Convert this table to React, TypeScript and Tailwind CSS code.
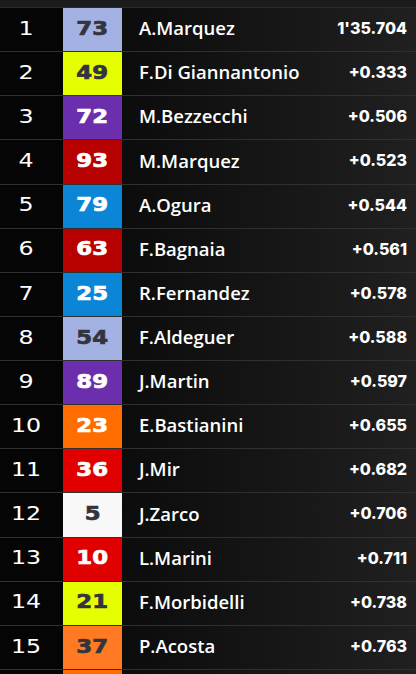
const riders = [
  { pos: 1, num: '73', bg: 'bg-[#a3b1e3]', dark: true, name: 'A.Marquez', time: "1'35.704" },
  { pos: 2, num: '49', bg: 'bg-[#e5ff00]', dark: true, name: 'F.Di Giannantonio', time: '+0.333' },
  { pos: 3, num: '72', bg: 'bg-[#6b2fae]', dark: false, name: 'M.Bezzecchi', time: '+0.506' },
  { pos: 4, num: '93', bg: 'bg-[#b70000]', dark: false, name: 'M.Marquez', time: '+0.523' },
  { pos: 5, num: '79', bg: 'bg-[#0b86d6]', dark: false, name: 'A.Ogura', time: '+0.544' },
  { pos: 6, num: '63', bg: 'bg-[#b70000]', dark: false, name: 'F.Bagnaia', time: '+0.561' },
  { pos: 7, num: '25', bg: 'bg-[#0b86d6]', dark: false, name: 'R.Fernandez', time: '+0.578' },
  { pos: 8, num: '54', bg: 'bg-[#a3b1e3]', dark: true, name: 'F.Aldeguer', time: '+0.588' },
  { pos: 9, num: '89', bg: 'bg-[#6b2fae]', dark: false, name: 'J.Martin', time: '+0.597' },
  { pos: 10, num: '23', bg: 'bg-[#ff6c00]', dark: false, name: 'E.Bastianini', time: '+0.655' },
  { pos: 11, num: '36', bg: 'bg-[#e10000]', dark: false, name: 'J.Mir', time: '+0.682' },
  { pos: 12, num: '5', bg: 'bg-[#f8f8f8]', dark: true, name: 'J.Zarco', time: '+0.706' },
  { pos: 13, num: '10', bg: 'bg-[#e10000]', dark: false, name: 'L.Marini', time: '+0.711' },
  { pos: 14, num: '21', bg: 'bg-[#e5ff00]', dark: true, name: 'F.Morbidelli', time: '+0.738' },
  { pos: 15, num: '37', bg: 'bg-[#ff7a22]', dark: true, name: 'P.Acosta', time: '+0.763' },
  { pos: 16, num: '', bg: 'bg-[#ff6c00]', dark: false, name: '', time: '' },
];

export default function App() {
  return (
    <div className="h-[674px] w-[416px] overflow-hidden bg-black">
      <div className="h-[8px] border-b border-[#2a2a2a] bg-[#1b1b1b]" />
      {riders.map((r) => (
        <div key={r.pos} className="flex h-[44.14px] shrink-0 border-b border-[#303030]">
          <div className="flex w-[63px] items-center bg-[#050505] pb-[3px]">
            <span
              className="w-[52px] scale-x-125 text-center text-[19px] font-normal text-white"
              style={{ fontFamily: '"DejaVu Sans", sans-serif' }}
            >
              {r.num ? r.pos : ''}
            </span>
          </div>
          <div
            className={`flex w-[59px] items-center justify-center pb-[3px] ${r.bg} ${r.dark ? 'text-[#34343d]' : 'text-white'}`}
          >
            <span
              className="scale-x-120 text-[19px] font-bold [-webkit-text-stroke:0.7px_currentColor]"
              style={{ fontFamily: '"DejaVu Sans", sans-serif' }}
            >
              {r.num}
            </span>
          </div>
          <div className="flex flex-1 items-center justify-between bg-gradient-to-r from-[#0c0c0c] to-[#202020] pb-[3px] pl-[17px] pr-[9px]">
            <span
              className="text-[18.5px] font-semibold text-white"
              style={{ fontFamily: '"Open Sans", sans-serif' }}
            >
              {r.name}
            </span>
            <span
              className="text-[16px] font-extrabold text-white"
              style={{ fontFamily: 'Inter, sans-serif' }}
            >
              {r.time}
            </span>
          </div>
        </div>
      ))}
    </div>
  );
}
